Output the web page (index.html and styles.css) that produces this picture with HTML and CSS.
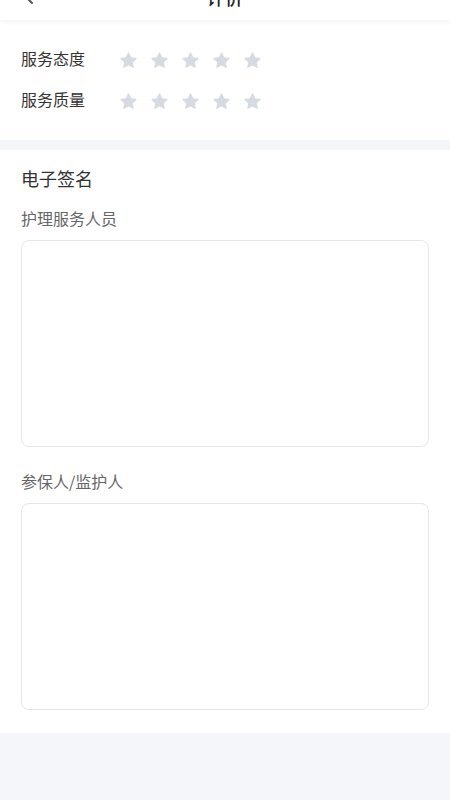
FILE: index.html
```html
<!DOCTYPE html>
<html lang="zh">
<head>
<meta charset="utf-8">
<title>评价</title>
<link rel="stylesheet" href="styles.css">
</head>
<body>
<header class="nav">
  <span class="nav-back">
    <svg width="12" height="20" viewBox="0 0 12 20"><path d="M10 2 L2 10 L10 18" fill="none" stroke="#555" stroke-width="2" stroke-linecap="round" stroke-linejoin="round"/></svg>
  </span>
  <span class="nav-title">评价</span>
</header>

<section class="rating">
  <div class="rate-row">
    <span class="rate-label">服务态度</span>
    <div class="stars">
      <svg class="star" viewBox="0 0 24 24"><path d="M12 2.5l2.9 6.1 6.6.8-4.9 4.6 1.3 6.6L12 17.3l-5.9 3.3 1.3-6.6-4.9-4.6 6.6-.8z"/></svg>
      <svg class="star" viewBox="0 0 24 24"><path d="M12 2.5l2.9 6.1 6.6.8-4.9 4.6 1.3 6.6L12 17.3l-5.9 3.3 1.3-6.6-4.9-4.6 6.6-.8z"/></svg>
      <svg class="star" viewBox="0 0 24 24"><path d="M12 2.5l2.9 6.1 6.6.8-4.9 4.6 1.3 6.6L12 17.3l-5.9 3.3 1.3-6.6-4.9-4.6 6.6-.8z"/></svg>
      <svg class="star" viewBox="0 0 24 24"><path d="M12 2.5l2.9 6.1 6.6.8-4.9 4.6 1.3 6.6L12 17.3l-5.9 3.3 1.3-6.6-4.9-4.6 6.6-.8z"/></svg>
      <svg class="star" viewBox="0 0 24 24"><path d="M12 2.5l2.9 6.1 6.6.8-4.9 4.6 1.3 6.6L12 17.3l-5.9 3.3 1.3-6.6-4.9-4.6 6.6-.8z"/></svg>
    </div>
  </div>
  <div class="rate-row">
    <span class="rate-label">服务质量</span>
    <div class="stars">
      <svg class="star" viewBox="0 0 24 24"><path d="M12 2.5l2.9 6.1 6.6.8-4.9 4.6 1.3 6.6L12 17.3l-5.9 3.3 1.3-6.6-4.9-4.6 6.6-.8z"/></svg>
      <svg class="star" viewBox="0 0 24 24"><path d="M12 2.5l2.9 6.1 6.6.8-4.9 4.6 1.3 6.6L12 17.3l-5.9 3.3 1.3-6.6-4.9-4.6 6.6-.8z"/></svg>
      <svg class="star" viewBox="0 0 24 24"><path d="M12 2.5l2.9 6.1 6.6.8-4.9 4.6 1.3 6.6L12 17.3l-5.9 3.3 1.3-6.6-4.9-4.6 6.6-.8z"/></svg>
      <svg class="star" viewBox="0 0 24 24"><path d="M12 2.5l2.9 6.1 6.6.8-4.9 4.6 1.3 6.6L12 17.3l-5.9 3.3 1.3-6.6-4.9-4.6 6.6-.8z"/></svg>
      <svg class="star" viewBox="0 0 24 24"><path d="M12 2.5l2.9 6.1 6.6.8-4.9 4.6 1.3 6.6L12 17.3l-5.9 3.3 1.3-6.6-4.9-4.6 6.6-.8z"/></svg>
    </div>
  </div>
</section>

<section class="sign">
  <h2 class="sign-title">电子签名</h2>
  <div class="sign-label">护理服务人员</div>
  <div class="sign-pad"></div>
  <div class="sign-label second">参保人/监护人</div>
  <div class="sign-pad"></div>
</section>
</body>
</html>
```

FILE: styles.css
```css
html, body {
  margin: 0;
  padding: 0;
}
body {
  background: #f4f6f9;
  font-family: "Noto Sans CJK SC", "Noto Sans", sans-serif;
  color: #333;
  min-height: 800px;
}
.nav {
  height: 46px;
  margin-top: -26px;
  background: #fff;
  display: flex;
  align-items: center;
  justify-content: center;
  position: relative;
  box-shadow: 0 2px 6px rgba(0, 0, 0, 0.05);
  z-index: 1;
}
.nav-back {
  position: absolute;
  left: 22px;
  top: 11px;
  display: flex;
}
.nav-title {
  font-size: 18px;
  line-height: 40px;
  color: #222;
  font-weight: 500;
}
.rating {
  background: #fff;
  padding: 17px 21px 21px;
}
.rate-row {
  display: flex;
  align-items: center;
  height: 41px;
}
.rate-label {
  font-size: 16px;
  color: #333;
  width: 98px;
}
.stars {
  display: flex;
  gap: 12px;
  padding-top: 5px;
}
.star {
  width: 19px;
  height: 19px;
  fill: #d6dae1;
  stroke: #d6dae1;
  stroke-width: 1.6;
  stroke-linejoin: round;
}
.sign {
  background: #fff;
  margin-top: 10px;
  padding: 16px 21px 23px;
}
.sign-title {
  margin: 0;
  font-size: 18px;
  line-height: 24px;
  font-weight: 400;
  color: #333;
}
.sign-label {
  margin-top: 17px;
  font-size: 16px;
  line-height: 22px;
  color: #666;
}
.sign-label.second {
  margin-top: 23px;
}
.sign-pad {
  margin-top: 11px;
  height: 205px;
  border: 1px solid #e6e6e6;
  border-radius: 8px;
}
```
